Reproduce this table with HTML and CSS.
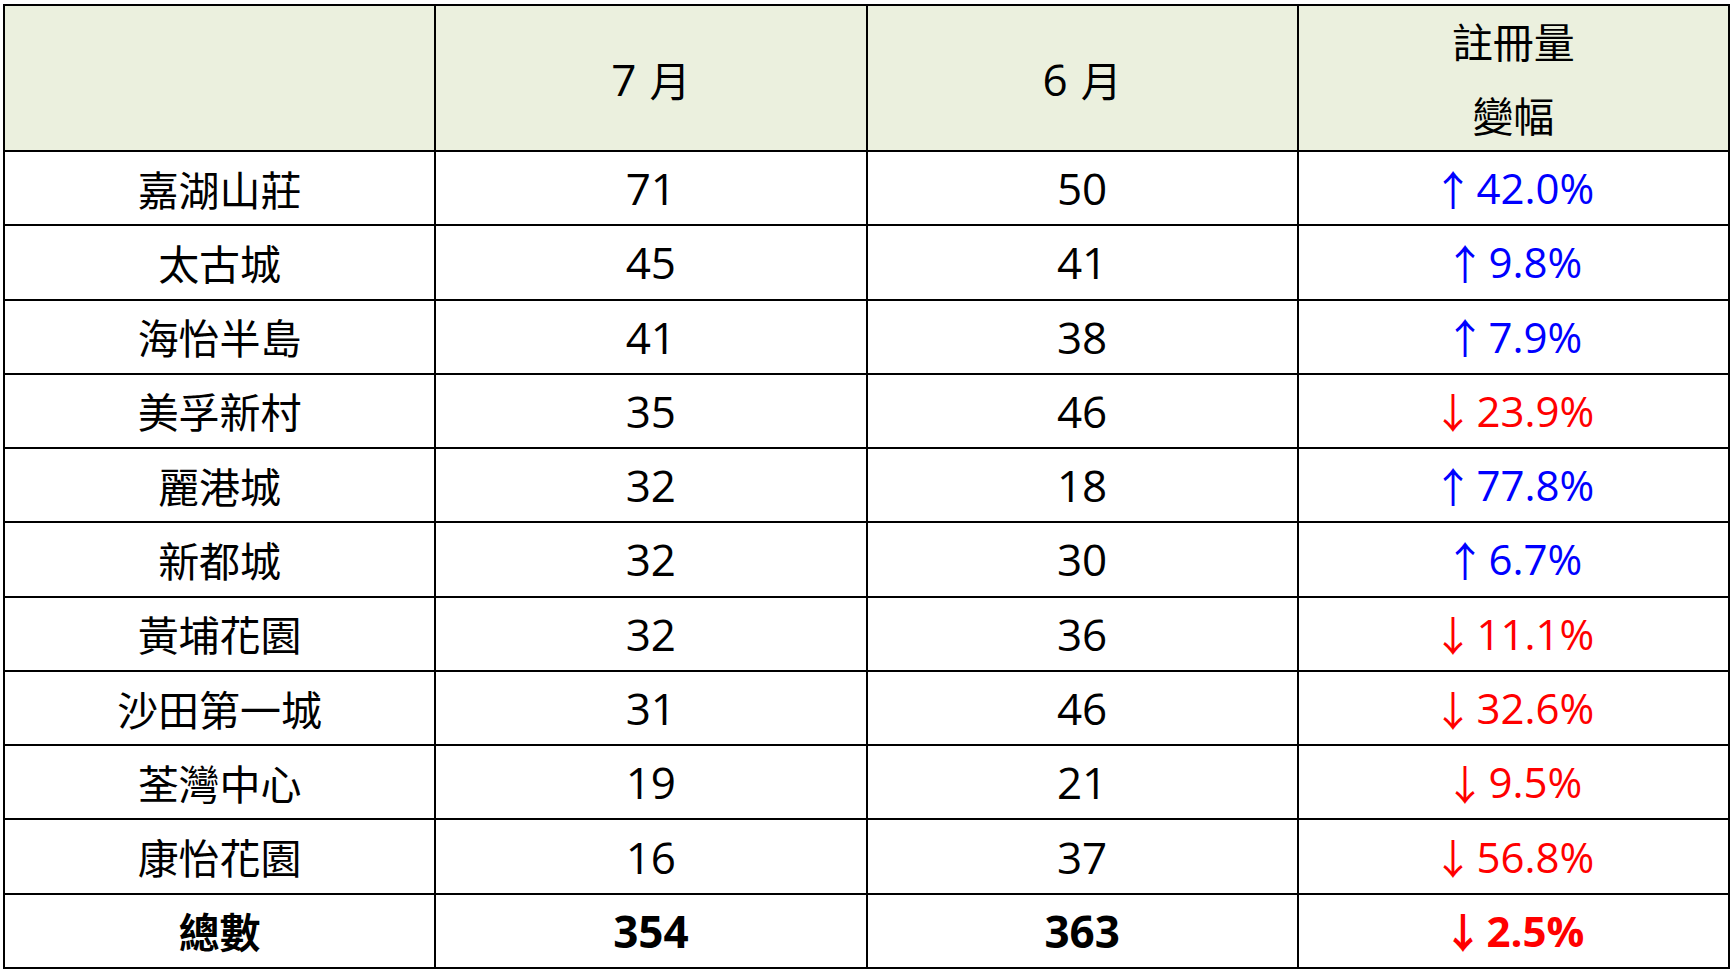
FILE: index.html
```html
<!DOCTYPE html>
<html lang="zh-Hant">
<head>
<meta charset="utf-8">
<title>註冊量變幅</title>
<link rel="stylesheet" href="styles.css">
</head>
<body>
<div class="table">
  <div class="cell head"></div>
  <div class="cell head"><span class="num mon">7</span>月</div>
  <div class="cell head"><span class="num mon">6</span>月</div>
  <div class="cell head two">註冊量<br>變幅</div>

  <div class="cell name">嘉湖山莊</div><div class="cell num">71</div><div class="cell num">50</div><div class="cell pct up"><span class="arr">↑</span>42.0%</div>
  <div class="cell name">太古城</div><div class="cell num">45</div><div class="cell num">41</div><div class="cell pct up"><span class="arr">↑</span>9.8%</div>
  <div class="cell name">海怡半島</div><div class="cell num">41</div><div class="cell num">38</div><div class="cell pct up"><span class="arr">↑</span>7.9%</div>
  <div class="cell name">美孚新村</div><div class="cell num">35</div><div class="cell num">46</div><div class="cell pct down"><span class="arr">↓</span>23.9%</div>
  <div class="cell name">麗港城</div><div class="cell num">32</div><div class="cell num">18</div><div class="cell pct up"><span class="arr">↑</span>77.8%</div>
  <div class="cell name">新都城</div><div class="cell num">32</div><div class="cell num">30</div><div class="cell pct up"><span class="arr">↑</span>6.7%</div>
  <div class="cell name">黃埔花園</div><div class="cell num">32</div><div class="cell num">36</div><div class="cell pct down"><span class="arr">↓</span>11.1%</div>
  <div class="cell name">沙田第一城</div><div class="cell num">31</div><div class="cell num">46</div><div class="cell pct down"><span class="arr">↓</span>32.6%</div>
  <div class="cell name">荃灣中心</div><div class="cell num">19</div><div class="cell num">21</div><div class="cell pct down"><span class="arr">↓</span>9.5%</div>
  <div class="cell name">康怡花園</div><div class="cell num">16</div><div class="cell num">37</div><div class="cell pct down"><span class="arr">↓</span>56.8%</div>
  <div class="cell name total">總數</div><div class="cell num total">354</div><div class="cell num total">363</div><div class="cell pct down total"><span class="arr">↓</span>2.5%</div>
</div>
</body>
</html>
```

FILE: styles.css
```css
html, body {
  margin: 0;
  padding: 0;
  background: #ffffff;
}

body {
  padding: 4px 0 0 3px;
  font-family: "Noto Sans CJK TC", "Noto Sans", sans-serif;
  color: #000000;
}

.table {
  box-sizing: border-box;
  width: 1727px;
  height: 965px;
  display: grid;
  grid-template-columns: repeat(4, 1fr);
  grid-template-rows: 146px repeat(11, 1fr);
  border-top: 2px solid #000;
  border-left: 2px solid #000;
}

.cell {
  border-right: 2px solid #000;
  border-bottom: 2px solid #000;
  display: flex;
  align-items: center;
  justify-content: center;
  font-size: 41px;
  font-weight: 400;
  line-height: 1;
  white-space: nowrap;
}

.head {
  background: #ebf0de;
  padding-top: 2px;
}

.head.two {
  text-align: center;
  line-height: 74px;
  padding-top: 0;
  padding-bottom: 3px;
}

.num {
  font-family: "Open Sans", "Noto Sans CJK TC", sans-serif;
  font-size: 44px;
  font-weight: 400;
}

.mon {
  margin-right: 13px;
}

.pct {
  font-family: "Open Sans", "Noto Sans CJK TC", sans-serif;
  font-size: 42px;
  font-weight: 400;
}

.arr {
  font-family: "Noto Sans CJK TC", sans-serif;
  font-size: 41px;
  margin-right: 3px;
}

.up {
  color: #0000ff;
}

.down {
  color: #ff0000;
}

.cell.total {
  font-weight: 700;
}
```
